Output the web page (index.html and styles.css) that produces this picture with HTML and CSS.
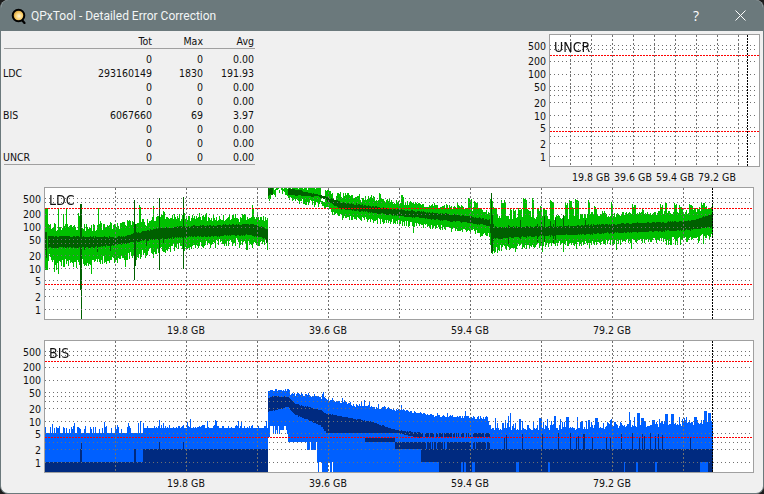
FILE: index.html
```html
<!DOCTYPE html>
<html lang="en">
<head>
<meta charset="utf-8">
<title>QPxTool - Detailed Error Correction</title>
<link rel="stylesheet" href="styles.css">
</head>
<body>
<div class="window">
  <header class="titlebar">
    <svg class="app-icon" width="16" height="16" viewBox="0 0 16 16">
      <defs><radialGradient id="qg" cx="0.55" cy="0.55" r="0.6"><stop offset="0" stop-color="#fff6d8"/><stop offset="0.55" stop-color="#f6c860"/><stop offset="1" stop-color="#b07a30"/></radialGradient></defs>
      <path d="M10.5 11.5 L13.5 15" stroke="#000" stroke-width="2.2" stroke-linecap="round"/>
      <circle cx="7.5" cy="7.5" r="5.8" fill="url(#qg)" stroke="#000" stroke-width="2"/>
    </svg>
    <span class="app-title">QPxTool - Detailed Error Correction</span>
    <span class="help">?</span>
    <svg class="close" width="11" height="11" viewBox="0 0 11 11"><path d="M0.5 0.5 L10.5 10.5 M10.5 0.5 L0.5 10.5" stroke="#fff" stroke-width="1" fill="none"/></svg>
  </header>
  <main class="content">
    <section class="top-row">
      <div class="stats">
        <div class="row head"><span></span><span>Tot</span><span>Max</span><span>Avg</span></div>
        <div class="row"><span></span><span>0</span><span>0</span><span>0.00</span></div>
        <div class="row"><span>LDC</span><span>293160149</span><span>1830</span><span>191.93</span></div>
        <div class="row"><span></span><span>0</span><span>0</span><span>0.00</span></div>
        <div class="row"><span></span><span>0</span><span>0</span><span>0.00</span></div>
        <div class="row"><span>BIS</span><span>6067660</span><span>69</span><span>3.97</span></div>
        <div class="row"><span></span><span>0</span><span>0</span><span>0.00</span></div>
        <div class="row"><span></span><span>0</span><span>0</span><span>0.00</span></div>
        <div class="row"><span>UNCR</span><span>0</span><span>0</span><span>0.00</span></div>
      </div>
      <div class="chart small">
        <div class="yaxis"><span class="t500">500</span><span class="t200">200</span><span class="t100">100</span><span class="t50">50</span><span class="t20">20</span><span class="t10">10</span><span class="t5">5</span><span class="t2">2</span><span class="t1">1</span></div>
        <div class="plot"><canvas id="uncr" width="209" height="131"></canvas><span class="plot-name">UNCR</span></div>
        <div class="xaxis"><span>19.8 GB</span><span>39.6 GB</span><span>59.4 GB</span><span>79.2 GB</span></div>
      </div>
    </section>
    <section class="chart wide">
      <div class="yaxis"><span class="t500">500</span><span class="t200">200</span><span class="t100">100</span><span class="t50">50</span><span class="t20">20</span><span class="t10">10</span><span class="t5">5</span><span class="t2">2</span><span class="t1">1</span></div>
      <div class="plot"><canvas id="ldc" width="708" height="131"></canvas><span class="plot-name">LDC</span></div>
      <div class="xaxis"><span>19.8 GB</span><span>39.6 GB</span><span>59.4 GB</span><span>79.2 GB</span></div>
    </section>
    <section class="chart wide">
      <div class="yaxis"><span class="t500">500</span><span class="t200">200</span><span class="t100">100</span><span class="t50">50</span><span class="t20">20</span><span class="t10">10</span><span class="t5">5</span><span class="t2">2</span><span class="t1">1</span></div>
      <div class="plot"><canvas id="bis" width="708" height="131"></canvas><span class="plot-name">BIS</span></div>
      <div class="xaxis"><span>19.8 GB</span><span>39.6 GB</span><span>59.4 GB</span><span>79.2 GB</span></div>
    </section>
  </main>
</div>
<script src="chart.js"></script>
</body>
</html>
```
FILE: styles.css
```css
* { box-sizing: border-box; }
html, body { margin: 0; height: 100%; background: #1c1c1c; }
body { font-family: "DejaVu Sans Condensed", "DejaVu Sans", sans-serif; font-stretch: condensed; font-size: 10.5px; color: #111; overflow: hidden; }

.window {
  width: 764px; height: 494px;
  display: flex; flex-direction: column;
  background: #f0f0f0;
  border: 1px solid #6b797c;
  border-top: 0;
  border-radius: 8px;
  overflow: hidden;
}

.titlebar {
  flex: none; height: 31px;
  display: flex; align-items: center;
  padding-left: 10px;
  background: #6b797c;
  color: #f2f5f5;
}
.app-icon { flex: none; margin-top: 1px; }
.app-title { margin-left: 4px; font-family: Roboto, sans-serif; font-stretch: normal; font-size: 12px; white-space: nowrap; }
.help { margin-left: auto; font-family: "Open Sans", sans-serif; font-stretch: normal; font-size: 14px; color: #fff; }
.close { flex: none; margin-left: 36px; margin-right: 17px; }

.content { flex: 1; display: flex; flex-direction: column; padding: 3px 3px 0; }
.top-row { display: flex; justify-content: space-between; align-items: flex-start; }

.stats { width: 251px; border-bottom: 1px solid #a0a0a0; }
.row { display: grid; grid-template-columns: 60px 88px 51px 51px; height: 14px; line-height: 14px; white-space: nowrap; }
.row span { text-align: right; }
.row span:first-child { text-align: left; margin-left: -1px; }
.row.head { height: 15px; margin-bottom: 3px; border-bottom: 1px solid #a0a0a0; }

.chart { display: grid; grid-template-rows: 133px 20px; }
.chart.wide { grid-template-columns: 40px 710px; }
.chart.small { grid-template-columns: 29px 211px; }

.plot { position: relative; border: 1px solid #a0a0a0; background: #fff; }
.plot canvas { display: block; }
.plot-name { position: absolute; left: 4px; top: 4px; font-size: 14px; line-height: 16px; color: #111; }

.yaxis { position: relative; }
.yaxis span { position: absolute; right: 3px; line-height: 14px; }
.t500 { top: 5px; } .t200 { top: 20px; } .t100 { top: 33px; }
.t50 { top: 46px; } .t20 { top: 62px; } .t10 { top: 75px; }
.t5 { top: 87px; } .t2 { top: 103px; } .t1 { top: 116px; }

.xaxis { grid-column: 2; display: flex; align-items: center; white-space: nowrap; }
.xaxis span { flex: none; text-align: center; }
.wide .xaxis { padding-left: 71px; }
.wide .xaxis span { width: 142px; }
.small .xaxis { padding-left: 21px; }
.small .xaxis span { width: 42px; }
```
FILE: chart.js
```js
(function () {
  var seed = 12345;
  function rnd() { seed = (seed * 1664525 + 1013904223) >>> 0; return ((seed >>> 8) % 1000003) / 1000003; }
  function lerp(t, x) {
    if (x <= t[0][0]) return t[0][1];
    for (var i = 1; i < t.length; i++) {
      if (x <= t[i][0]) {
        var a = t[i - 1], b = t[i];
        return a[1] + (b[1] - a[1]) * (x - a[0]) / (b[0] - a[0]);
      }
    }
    return t[t.length - 1][1];
  }
  /* rows of the log-scale grid lines, measured from the top of the plot */
  var grayRows = [10, 14, 26, 39, 51, 55, 60, 67, 80, 92, 101, 108, 121];
  var redRows = [20, 96];

  function grid(c, x0, w, h, xs, endX) {
    c.fillStyle = '#707070';
    grayRows.forEach(function (y) {
      for (var x = 0; x < w - 1; x += 4) c.fillRect(x, y, 1, 1);
    });
    c.fillStyle = '#ff0000';
    redRows.forEach(function (y) {
      for (var r = 0; r < w - 1; r += 3) c.fillRect(r, y, 2, 1);
    });
    c.fillStyle = '#707070';
    xs.forEach(function (ax) {
      for (var y = 0; y < h; y += 4) c.fillRect(ax - x0, y, 1, 2);
    });
    c.fillStyle = '#000';
    for (var b = 0; b < h; b += 3) c.fillRect(endX - x0, b, 1, 2);
  }

  function col(c, x, top, bot, color, x0, y0) {
    if (bot <= top) return;
    c.fillStyle = color;
    c.fillRect(x - x0, Math.round(top) - y0, 1, Math.round(bot) - Math.round(top));
  }

  var vx = [115, 186, 257, 328, 399, 470, 541, 612, 683];

  /* UNCR */
  (function () {
    var c = document.getElementById('uncr').getContext('2d');
    grid(c, 550, 209, 131, [570, 591, 612, 633, 654, 675, 696, 717, 738], 747);
  })();

  /* LDC */
  (function () {
    var c = document.getElementById('ldc').getContext('2d');
    var X0 = 45, Y0 = 188;
    var G = '#00c000', D = '#006000';
    var lt = [[45,227],[100,227],[140,223],[165,218],[190,217],[265,218],[267,221],[268,188],[288,187],[320,188],[330,192],[340,194],[400,203],[440,206],[470,208],[489,213],[491,217],[540,218],[612,215],[690,211],[712,206]];
    var lb = [[45,256],[60,263],[100,261],[140,255],[160,249],[190,246],[230,242],[265,242],[267,248],[268,202],[272,193],[280,191],[288,199],[320,205],[340,217],[400,223],[470,231],[489,235],[491,252],[500,248],[540,245],[612,242],[690,239],[712,236]];
    var dt = [[45,236],[100,237],[120,237],[140,232],[160,228],[190,226],[250,224],[265,228],[267,230],[268,188],[288,188],[320,195],[340,202],[400,210],[470,216],[489,220],[491,227],[540,227],[612,224],[690,221],[712,214]];
    var db = [[45,248],[100,247],[140,241],[160,239],[190,237],[250,235],[265,239],[267,241],[268,195],[288,195],[320,197],[340,209],[400,216],[470,223],[489,226],[491,239],[540,236],[612,233],[690,230],[712,227]];
    var left = 0, val = 0;
    for (var x = 45; x <= 712; x++) {
      var big = x < 268;
      var t = lerp(lt, x) + (rnd() - 0.5) * (big ? 8 : 5);
      var b = lerp(lb, x) + (rnd() - 0.5) * (big ? 9 : 6);
      var prob = 0, lo = 0, hi = 0;
      if (x < 268) { prob = 0.09; lo = 205; hi = 222; }
      else if (x < 320) { prob = 0; }
      else if (x < 440) { prob = 0.1; lo = 191; hi = 203; }
      else if (x < 491) { prob = 0.14; lo = 194; hi = 208; }
      else if (x < 612) { prob = 0.2; lo = 197; hi = 212; }
      else { prob = 0.17; lo = 200; hi = 212; }
      if (left > 0) { t = val + rnd() * 3; left--; }
      else if (rnd() < prob) { val = lo + rnd() * (hi - lo); t = val; left = big ? Math.floor(rnd() * 2) : 1 + Math.floor(rnd() * 3); }
      if (rnd() < (big ? 0.12 : 0.08)) b += rnd() * (x < 150 ? 14 : 7);
      col(c, x, Math.max(t, 188), b, G, X0, Y0);
      var noDark = x > 272 && x < 288;
      if (!noDark) {
        var a = lerp(dt, x) + (rnd() - 0.5) * 1.5;
        var e = lerp(db, x) + (rnd() - 0.5) * 1.5;
        if (x >= 491 && x < 590 && rnd() < 0.14) { a -= rnd() * 14; e += rnd() * 9; }
        if (x < 268 && rnd() < 0.04) { e += rnd() * 8; }
        col(c, x, a, e, D, X0, Y0);
      }
    }
    [[80,204,290],[81,204,319],[134,200,280],[135,224,266],[159,198,270],[183,197,269],[491,193,253],[492,215,252]].forEach(function (s) {
      col(c, s[0], s[1], s[2], D, X0, Y0);
    });
    [[45,208,270],[46,208,270],[47,208,268],[54,250,272]].forEach(function (s) { col(c, s[0], s[1], s[2], G, X0, Y0); });
    [[45,232,250],[46,232,258]].forEach(function (s) { col(c, s[0], s[1], s[2], D, X0, Y0); });
    grid(c, X0, 708, 131, vx, 712);
  })();

  /* BIS */
  (function () {
    var c = document.getElementById('bis').getContext('2d');
    var X0 = 45, Y0 = 341;
    var B = '#0060ff', N = '#002a80';
    var top = [[268,390],[289,390],[290,394],[310,395],[320,397],[353,405],[400,410],[437,416],[487,418],[490,429],[550,429],[590,428],[640,426],[700,424],[712,423]];
    var nt = [[268,398],[275,396],[288,397],[295,404],[320,410],[326,414],[334,415],[372,422],[395,430],[420,433]];
    var nb = [[268,412],[275,410],[288,407],[295,415],[320,425],[326,433],[395,433],[420,438]];
    var stripe = 0, hold = 0, holdVal = 0;
    for (var x = 45; x <= 712; x++) {
      var t, edge = 472;
      var p = rnd();
      if (x < 143) {
        t = 433;
        if (p < 0.5) t = 429 - rnd() * 3;
        if (p < 0.08) t = 421 + rnd() * 5;
      } else if (x < 268) {
        t = 428;
        if (p < 0.55) t = 425 + rnd() * 2;
        if (p < 0.12) t = 419 + rnd() * 5;
      } else {
        t = lerp(top, x) + (rnd() - 0.5) * 3;
        if (x >= 490) {
          if (hold > 0) { t = holdVal; hold--; }
          else {
            if (p < 0.6) t -= rnd() * 8;
            if (p < 0.1) { t -= 4 + rnd() * 5; holdVal = t; hold = Math.floor(rnd() * 3); }
          }
        } else if (x > 320 && p < 0.15) t -= rnd() * 6;
      }
      if (x >= 268) {
        if (x < 270) edge = 437;
        else if (x < 288) edge = 426 + Math.floor(rnd() * 3) * 4;
        else if (x < 307) edge = p < 0.1 ? 437 : 442;
        else if (x < 317) edge = p < 0.4 ? 442 : 450;
        else if (x < 322) edge = x === 318 ? 472 : 462;
        else if (x === 328 || x === 329 || x === 332) edge = 462;
      }
      col(c, x, t, edge, B, X0, Y0);
      if (x < 143) col(c, x, 462, 472, N, X0, Y0);
      else if (x < 268) col(c, x, 449, 472, N, X0, Y0);
      else {
        if (x <= 420) col(c, x, lerp(nt, x) + (rnd() - 0.5), lerp(nb, x) + (rnd() - 0.5), N, X0, Y0);
        if (x >= 365 && x < 395) col(c, x, 438, 442, N, X0, Y0);
        if (x >= 395 && x < 421) col(c, x, 442, 449, N, X0, Y0);
        if (x >= 421 && x < 490) {
          if (rnd() < 0.8) col(c, x, 433, 437, N, X0, Y0);
          if (rnd() < 0.85) col(c, x, 442, 449, N, X0, Y0);
        }
        if (x >= 490 && rnd() < 0.12) col(c, x, 433 + rnd() * 6, 449, N, X0, Y0);
        if (x >= 421) col(c, x, 449, 462, N, X0, Y0);
        if (x >= 439) {
          if (stripe > 0) stripe--;
          else if (rnd() < (x < 490 ? 0.08 : 0.05)) stripe = 1 + Math.floor(rnd() * 3);
          if (stripe === 0 && !(x >= 700 && x < 708)) col(c, x, 462, 472, N, X0, Y0);
        }
      }
    }
    [[80,449,462],[81,449,462],[134,449,462],[135,449,462],[81,442,449],[159,442,449],[183,442,449]].forEach(function (s) { col(c, s[0], s[1], s[2], N, X0, Y0); });
    grid(c, X0, 708, 131, vx, 712);
  })();
})();
```
